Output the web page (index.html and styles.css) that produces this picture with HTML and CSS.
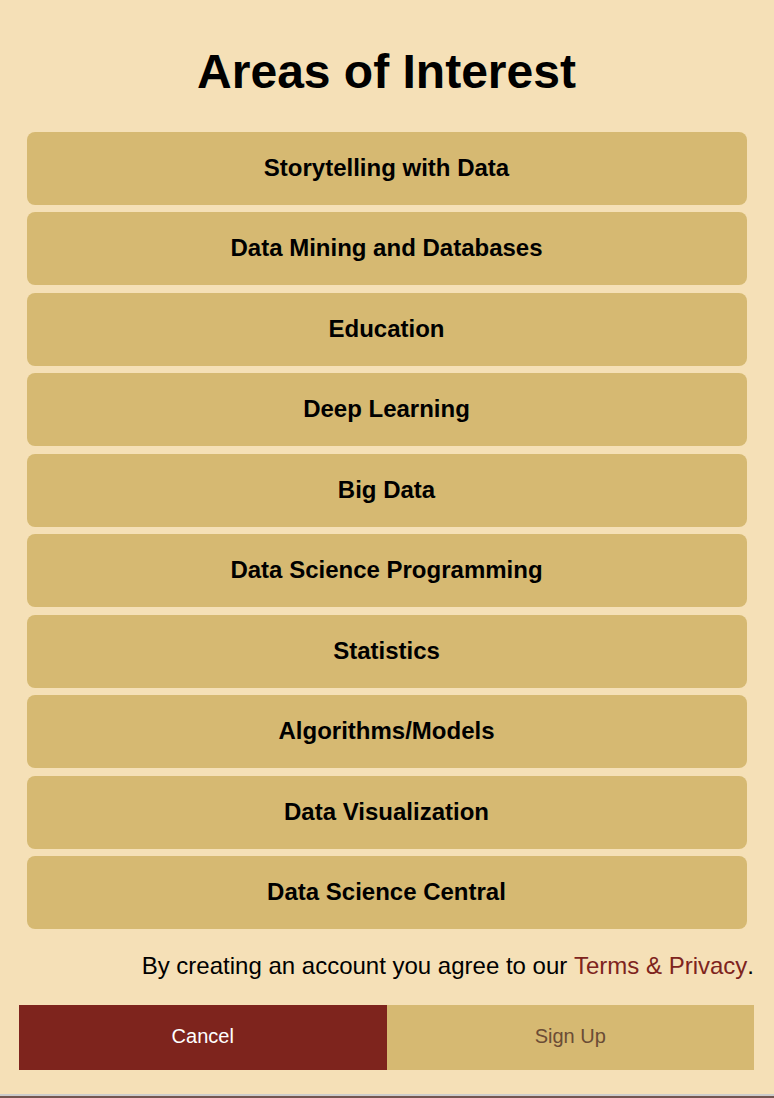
FILE: index.html
```
<!DOCTYPE html>
<html lang="en">
<head>
<meta charset="utf-8">
<title>Areas of Interest</title>
<link rel="stylesheet" href="styles.css">
</head>
<body class="page">
<form class="signup">
  <h1 class="title">Areas of Interest</h1>
  <div class="topics">
    <button class="topic" type="button">Storytelling with Data</button>
    <button class="topic" type="button">Data Mining and Databases</button>
    <button class="topic" type="button">Education</button>
    <button class="topic" type="button">Deep Learning</button>
    <button class="topic" type="button">Big Data</button>
    <button class="topic" type="button">Data Science Programming</button>
    <button class="topic" type="button">Statistics</button>
    <button class="topic" type="button">Algorithms/Models</button>
    <button class="topic" type="button">Data Visualization</button>
    <button class="topic" type="button">Data Science Central</button>
  </div>
  <p class="terms">By creating an account you agree to our <a class="terms-link" href="#">Terms &amp; Privacy</a>.</p>
  <div class="actions">
    <button class="action cancel" type="button">Cancel</button>
    <button class="action submit" type="submit">Sign Up</button>
  </div>
</form>
</body>
</html>
```
FILE: styles.css
```
* { box-sizing: border-box; }

.page {
  margin: 0;
  border-bottom: 2px solid #745650;
  background: #f5e0b7;
  color: #000;
  font-family: "Liberation Sans", Arial, sans-serif;
  font-size: 24px;
}

.signup {
  padding: 44px 20px 24px 19px;
  border-bottom: 2px solid #ccc;
}

.title {
  margin: 0 0 32px;
  font-size: 48px;
  line-height: 56px;
  text-align: center;
}

.topics {
  display: flex;
  flex-direction: column;
  padding: 0 7px 0 8px;
}

.topic {
  margin: 0 0 7px;
  padding: 22px 1px 23px 0;
  border: 0;
  border-radius: 8px;
  background: #d6b972;
  color: #000;
  font: bold 24px/28px "Liberation Sans", Arial, sans-serif;
}

.topic:nth-child(even) { margin-bottom: 8px; }

.terms {
  margin: 15px 0 25px;
  line-height: 28px;
  text-align: right;
}

.terms-link {
  display: inline-block;
  color: #7e241d;
  text-decoration: none;
}

.actions { display: flex; }

.action {
  flex: 1;
  padding: 19px 20px 21px;
  border: 0;
  font: 20px/25px "Liberation Sans", Arial, sans-serif;
}

.cancel {
  background: #7e241d;
  color: #fff;
}

.submit {
  background: #d6b972;
  color: #6b4c35;
}
```
